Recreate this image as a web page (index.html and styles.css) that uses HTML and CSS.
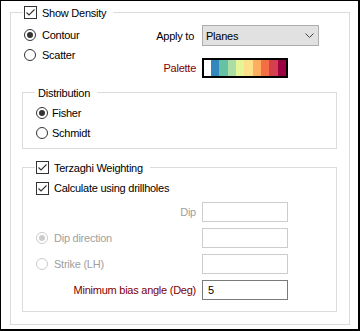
FILE: index.html
```html
<!DOCTYPE html>
<html lang="en">
<head>
    <meta charset="UTF-8">
    <title>Density</title>
    <link rel="stylesheet" href="styles.css">
</head>
<body>
    <div class="window">
        <div class="group outer">
            <div class="group-head">
                <div class="caption">
                    <span class="check"><svg width="11" height="11" viewBox="0 0 11 11"><polyline points="1.5,5.5 4,8 9.5,2.5" /></svg></span>
                    Show Density
                </div>
            </div>
            <div class="group-body outer-body">
                <div class="top">
                    <div class="modes">
                        <div class="opt"><span class="radio on"></span>Contour</div>
                        <div class="opt"><span class="radio"></span>Scatter</div>
                    </div>
                    <div class="fields">
                        <span class="lbl apply">Apply to</span>
                        <div class="select">
                            <span>Planes</span>
                            <svg width="9" height="5" viewBox="0 0 9 5"><polyline points="0.5,0.5 4.5,4.5 8.5,0.5" /></svg>
                        </div>
                        <span class="lbl red">Palette</span>
                        <div class="palette">
                            <i class="c1"></i><i class="c2"></i><i class="c3"></i><i class="c4"></i><i class="c5"></i>
                            <i class="c6"></i><i class="c7"></i><i class="c8"></i><i class="c9"></i><i class="c10"></i>
                        </div>
                    </div>
                </div>

                <div class="group inner">
                    <div class="group-head">
                        <div class="caption text-only">Distribution</div>
                    </div>
                    <div class="group-body dist-body">
                        <div class="opt small"><span class="radio on"></span>Fisher</div>
                        <div class="opt small"><span class="radio"></span>Schmidt</div>
                    </div>
                </div>

                <div class="group inner terz">
                    <div class="group-head">
                        <div class="caption">
                            <span class="check"><svg width="11" height="11" viewBox="0 0 11 11"><polyline points="1.5,5.5 4,8 9.5,2.5" /></svg></span>
                            Terzaghi Weighting
                        </div>
                    </div>
                    <div class="group-body terz-body">
                        <div class="opt">
                            <span class="check"><svg width="11" height="11" viewBox="0 0 11 11"><polyline points="1.5,5.5 4,8 9.5,2.5" /></svg></span>
                            Calculate using drillholes
                        </div>
                        <div class="form">
                            <span class="lbl grey">Dip</span>
                            <div class="input off"></div>
                            <div class="opt grey"><span class="radio on off"></span>Dip direction</div>
                            <div class="input off"></div>
                            <div class="opt grey"><span class="radio off"></span>Strike (LH)</div>
                            <div class="input off"></div>
                            <span class="lbl red">Minimum bias angle (Deg)</span>
                            <div class="input">5</div>
                        </div>
                    </div>
                </div>
            </div>
        </div>
    </div>
</body>
</html>
```

FILE: styles.css
```css
/* Base */
body {
    margin: 0;
    font-family: "Liberation Sans", Arial, sans-serif;
    font-size: 11px;
    letter-spacing: -0.25px;
    color: #000;
    background: #fff;
}

.window {
    box-sizing: border-box;
    width: 360px;
    height: 331px;
    border-style: solid;
    border-color: #000;
    border-width: 1px 2px 2px 1px;
    background: #fff;
}

/* Group boxes */
.group-head {
    display: flex;
    height: 15px;
}

.group-head::before,
.group-head::after {
    content: "";
    box-sizing: border-box;
    height: 8px;
    margin-top: 7px;
    border-top: 1px solid #dcdcdc;
}

.group-head::before {
    width: 13px;
    border-left: 1px solid #dcdcdc;
}

.group-head::after {
    flex: 1;
    border-right: 1px solid #dcdcdc;
}

.caption {
    display: flex;
    align-items: center;
    gap: 5px;
    padding: 0 7px 0 1px;
}

.caption.text-only {
    padding-left: 3px;
}

.group-body {
    border: 1px solid #dcdcdc;
    border-top: none;
}

.outer {
    width: 340px;
    margin: 4px 0 0 9px;
}

.outer-body {
    padding-bottom: 12px;
}

.inner {
    margin: 7px 12px 0 11px;
}

.inner.terz {
    margin-top: 11px;
}

/* Controls */
.check {
    box-sizing: border-box;
    width: 13px;
    height: 13px;
    border: 1px solid #333;
    background: #fff;
    display: flex;
}

.check polyline {
    fill: none;
    stroke: #333;
    stroke-width: 1.1;
}

.radio {
    box-sizing: border-box;
    width: 12px;
    height: 12px;
    border: 1px solid #333;
    border-radius: 50%;
    background: #fff;
    display: flex;
    align-items: center;
    justify-content: center;
}

.radio.on::after {
    content: "";
    width: 6px;
    height: 6px;
    border-radius: 50%;
    background: #333;
}

.radio.off {
    border-color: #cccccc;
}

.radio.on.off::after {
    background: #cccccc;
}

.opt {
    display: flex;
    align-items: center;
    gap: 6px;
    height: 20px;
}

.opt .check {
    margin-right: -1px;
}

.opt.small {
    gap: 4px;
}

.grey {
    color: #a0a0a0;
}

.red {
    color: #800000;
}

.lbl {
    text-align: right;
    align-self: center;
}

.lbl.apply {
    padding-right: 2px;
}

/* Top section */
.top {
    display: flex;
    height: 58px;
}

.modes {
    flex: 1;
    padding: 5px 0 0 13px;
}

.fields {
    display: grid;
    grid-template-columns: 60px 117px;
    grid-template-rows: 21px 20px;
    column-gap: 6px;
    row-gap: 12px;
    padding-top: 5px;
    margin-right: 30px;
}

.select {
    box-sizing: border-box;
    display: flex;
    align-items: center;
    justify-content: space-between;
    padding: 0 4px 0 3px;
    background: #e1e1e1;
    border: 1px solid #adadad;
}

.select polyline {
    fill: none;
    stroke: #444;
    stroke-width: 1;
}

.palette {
    box-sizing: border-box;
    display: flex;
    width: 86px;
    border: 2px solid #000;
}

.palette i {
    flex: 1;
}

.palette .c1 { flex: 0 0 7px; background: #fff; }
.palette .c2 { background: #3288bd; }
.palette .c3 { background: #66c2a5; }
.palette .c4 { background: #abdda4; }
.palette .c5 { background: #e6f598; }
.palette .c6 { background: #fee08b; }
.palette .c7 { background: #fdae61; }
.palette .c8 { background: #f46d43; }
.palette .c9 { background: #d53e4f; }
.palette .c10 { background: #9e0142; }

/* Distribution */
.dist-body {
    padding: 3px 0 5px 13px;
}

/* Terzaghi */
.terz .caption {
    padding-left: 1px;
}

.terz-body {
    padding: 3px 48px 11px 13px;
}

.form {
    display: grid;
    grid-template-columns: 1fr 86px;
    grid-auto-rows: 20px;
    column-gap: 6px;
    row-gap: 6px;
    margin-top: 4px;
}

.input {
    box-sizing: border-box;
    border: 1px solid #7a7a7a;
    background: #fff;
    padding: 0 5px;
    display: flex;
    align-items: center;
}

.input.off {
    border-color: #cccccc;
}
```
